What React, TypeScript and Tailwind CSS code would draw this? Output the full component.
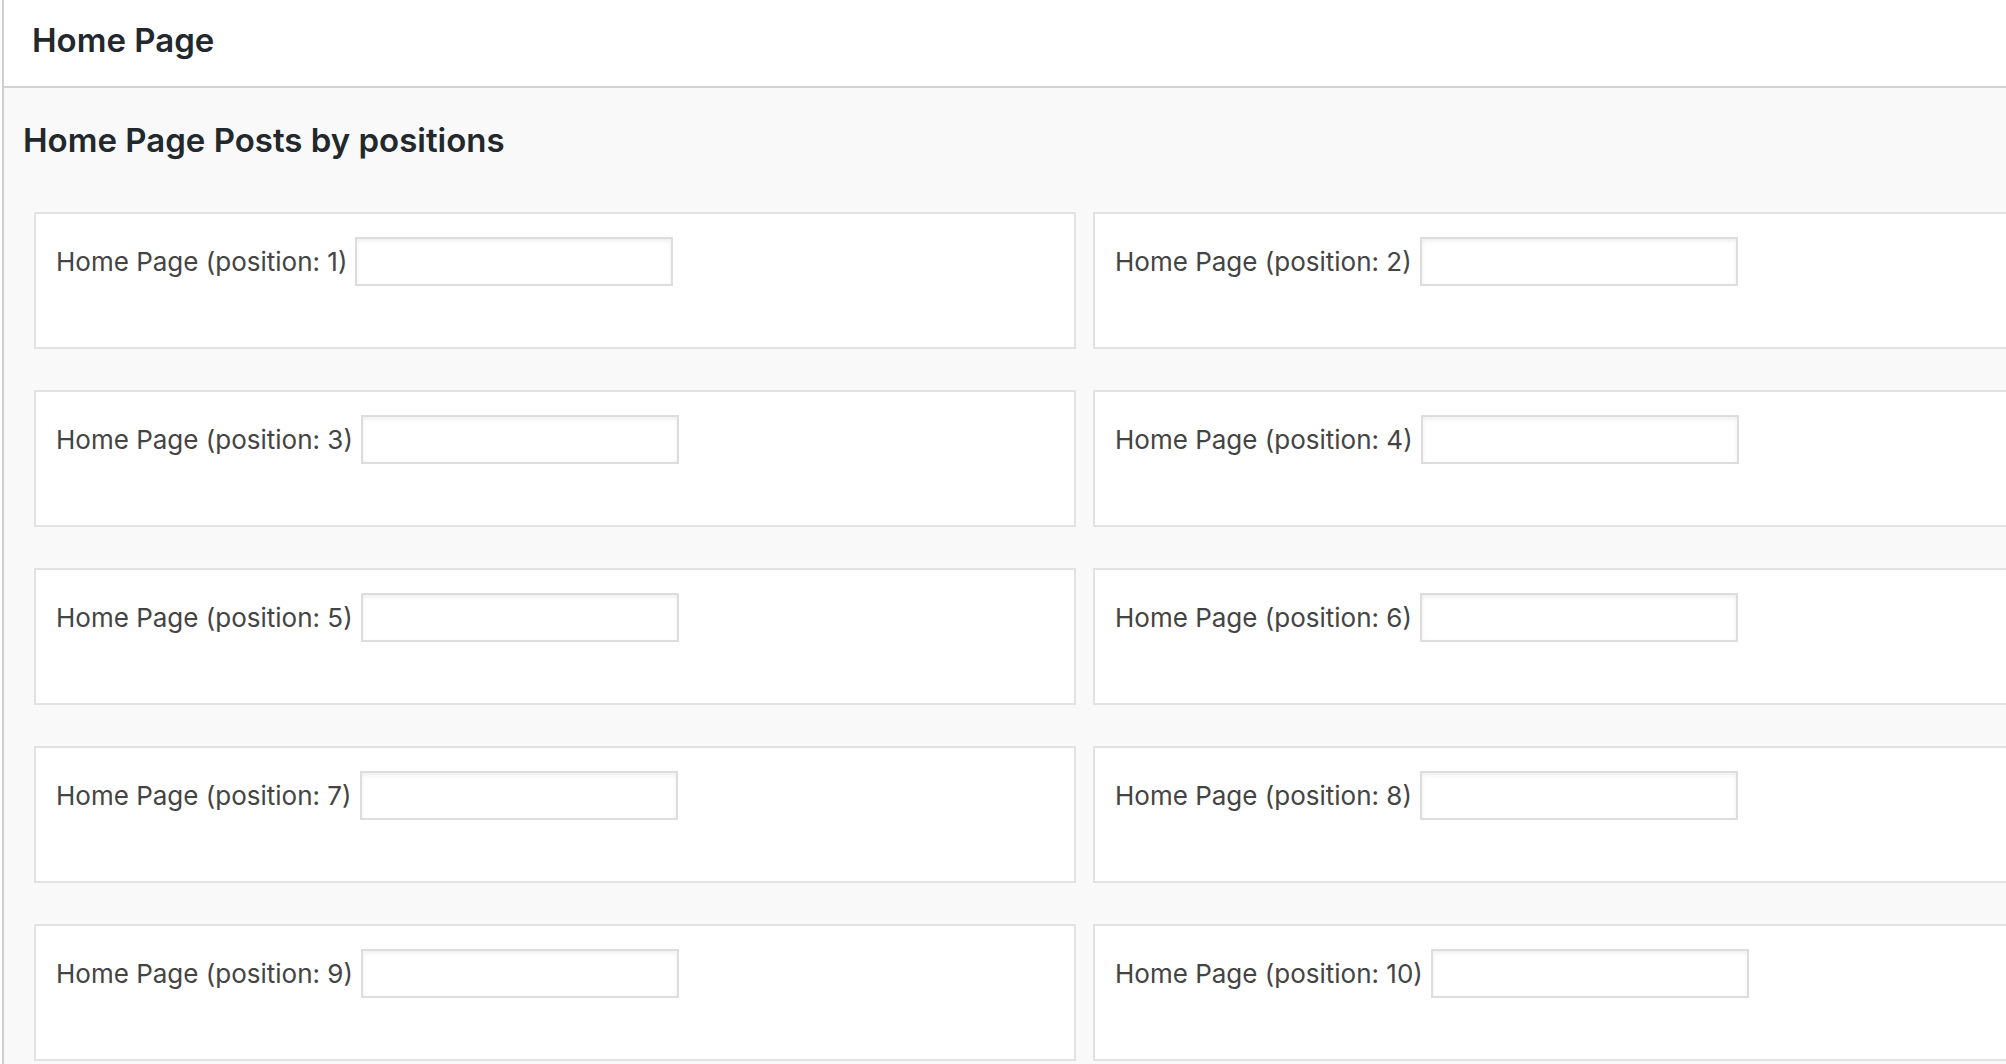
import React from 'react';

const positions = Array.from({ length: 10 }, (_, i) => i + 1);

function PositionCard({ position }: { position: number }) {
  return (
    <div className="h-[137px] border-2 border-[#e2e2e2] bg-white pl-[20px] pt-[23px]">
      <div className="flex items-center">
        <label className="text-[26px] leading-[32px] text-[#444444] whitespace-nowrap">
          Home Page (position: {position})
        </label>
        <input
          type="text"
          className="ml-[8px] h-[49px] w-[318px] border-2 border-[#dddddd] bg-white shadow-[inset_0_2px_4px_rgba(0,0,0,0.07)] outline-none"
        />
      </div>
    </div>
  );
}

export default function App() {
  return (
    <div className="h-[1064px] w-[2006px] overflow-hidden bg-white font-['Inter',sans-serif]">
      <div className="ml-[2px] h-full border-l-2 border-[#cfcfcf]">
        {/* Cabecera */}
        <div className="h-[88px] border-b-2 border-[#d2d2d2] bg-white pl-[28px] pt-[19px]">
          <h2 className="text-[33px] leading-[42px] font-semibold text-[#23282d]">Home Page</h2>
        </div>

        {/* Contenido */}
        <div className="h-full bg-[#f9f9f9] pt-[32px]">
          <h3 className="pl-[19px] text-[33px] leading-[40px] font-semibold text-[#23282d]">
            Home Page Posts by positions
          </h3>
          <div className="mt-[52px] grid grid-cols-[1042px_1042px] gap-x-[17px] gap-y-[41px] pl-[30px]">
            {positions.map((p) => (
              <PositionCard key={p} position={p} />
            ))}
          </div>
        </div>
      </div>
    </div>
  );
}
